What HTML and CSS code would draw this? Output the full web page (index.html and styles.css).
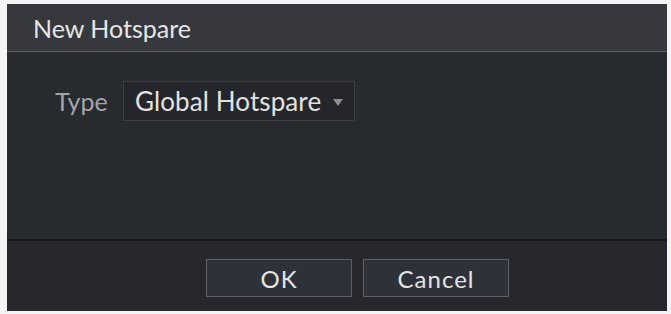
FILE: index.html
```html
<!DOCTYPE html>
<html>
<head>
<meta charset="utf-8">
<link rel="stylesheet" href="styles.css">
</head>
<body>
<div class="dialog">
  <div class="title">New Hotspare</div>
  <div class="content">
    <div class="row">
      <span class="label">Type</span>
      <div class="select">
        <span class="value">Global Hotspare</span>
        <svg class="arrow" width="10" height="7" viewBox="0 0 10 7"><path d="M0 0 H10 L5 7 Z" fill="#8d8f93"/></svg>
      </div>
    </div>
  </div>
  <div class="footer">
    <button class="btn">OK</button>
    <button class="btn">Cancel</button>
  </div>
</div>
</body>
</html>
```
FILE: styles.css
```css
html, body {
  margin: 0;
  padding: 0;
  background: #f4f4f4;
}
body {
  padding: 4px 4px 3px 7px;
  font-family: Lato, "Open Sans", sans-serif;
}
.dialog {
  width: 660px;
  height: 307px;
  background: #272a2f;
  display: flex;
  flex-direction: column;
}
.title {
  height: 48px;
  box-sizing: border-box;
  border-bottom: 1px solid #5d5f64;
  background: #36383d;
  color: #e6e6e6;
  font-size: 25px;
  padding-left: 26px;
  display: flex;
  align-items: center;
}
.content {
  flex: 1;
  padding: 29px 0 0 48px;
  border-bottom: 2px solid #17181b;
}
.row {
  display: flex;
  align-items: center;
}
.label {
  color: #a3a5a8;
  font-size: 25px;
  width: 68px;
}
.select {
  width: 232px;
  height: 40px;
  box-sizing: border-box;
  border: 1px solid #3d4045;
  background: #24262b;
  display: flex;
  align-items: center;
  padding-left: 11px;
}
.value {
  color: #e2e2e2;
  font-size: 26px;
  letter-spacing: 0.1px;
  margin-right: 12px;
}
.arrow {
  display: block;
  margin-top: 2px;
}
.footer {
  height: 70px;
  box-sizing: border-box;
  background: #26282d;
  padding: 18px 0 0 199px;
  display: flex;
  gap: 11px;
  align-items: flex-start;
}
.btn {
  width: 146px;
  height: 38px;
  border: 1px solid #606267;
  background: #2f3138;
  color: #e4e4e4;
  font-family: Lato, "Open Sans", sans-serif;
  font-size: 24px;
  letter-spacing: 1px;
  padding: 0;
}
```
